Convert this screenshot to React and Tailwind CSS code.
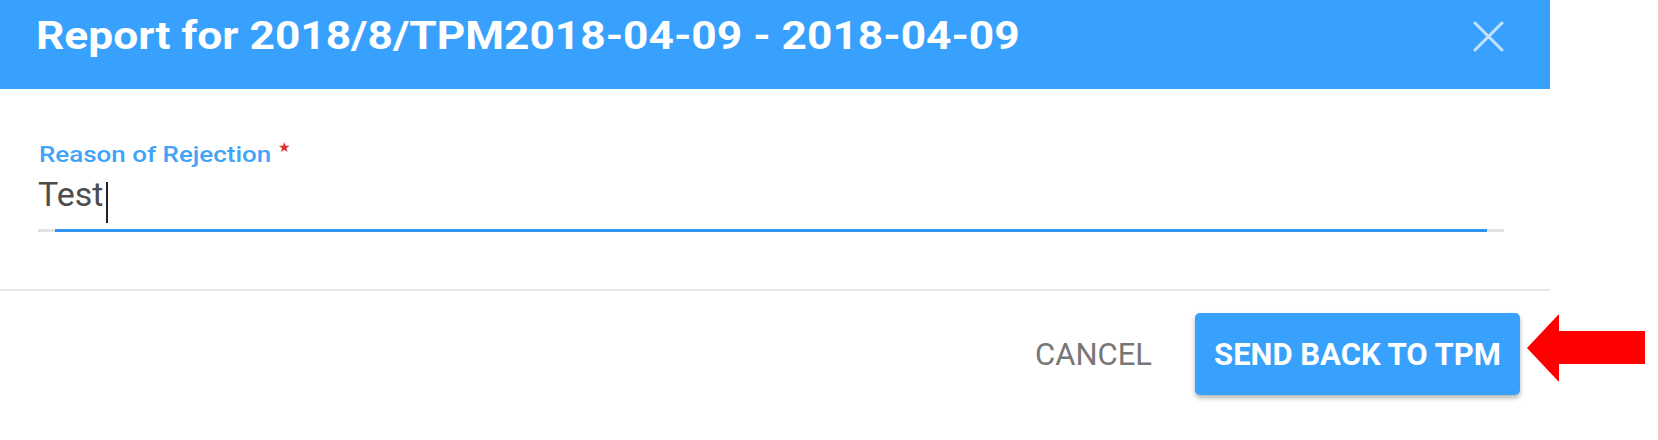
import React from 'react';

const BLUE = 'bg-[#38a1fd]';

const CloseIcon = () => (
    <svg width="31" height="31" viewBox="0 0 31 31" className="mt-[21px] mr-[46px] shrink-0">
        <path d="M2 2L29 29M29 2L2 29" stroke="#c6e3fe" strokeWidth="3" strokeLinecap="round" />
    </svg>
);

const App = () => {
    return (
        <div className="relative w-[1658px] h-[440px] bg-white font-['Roboto',sans-serif] overflow-hidden">
            <div className="w-[1550px]">
                {/* Header */}
                <div className={`flex items-start justify-between h-[89px] ${BLUE} pl-[36px]`}>
                    <h2 className="pt-[17px] text-[38px] leading-none font-bold text-white whitespace-nowrap origin-left scale-x-[1.165]">
                        Report for 2018/8/TPM2018-04-09 - 2018-04-09
                    </h2>
                    <CloseIcon />
                </div>

                {/* Body */}
                <div className="h-[200px] pl-[38px] pr-[46px] pt-[55px]">
                    <label className="flex items-start pl-[1px] text-[22px] leading-none font-medium text-[#42a4f7]">
                        <span className="origin-left scale-x-[1.18] whitespace-nowrap">Reason of Rejection</span>
                        <span className="ml-[42px] -mt-[4px] text-[14px] text-[#e0322f]">★</span>
                    </label>
                    <div className="flex items-start mt-[11px] h-[46px]">
                        <span className="text-[34px] leading-none text-[#4d4d4d]">Test</span>
                        <span className="ml-[3px] mt-[5px] w-[2px] h-[41px] bg-[#222]" />
                    </div>
                    <div className="mt-[6px] h-[3px] bg-[#e2e2e2]">
                        <div className="mx-[17px] h-full bg-[#2f96f3]" />
                    </div>
                </div>

                <div className="h-[2px] bg-[#e8e8e8]" />

                {/* Actions */}
                <div className="flex items-center justify-end pt-[22px] pr-[30px]">
                    <button className="mr-[43px] text-[31px] leading-none text-[#777]">
                        CANCEL
                    </button>
                    <button className={`w-[325px] h-[82px] rounded-[5px] ${BLUE} shadow-[0_3px_5px_rgba(0,0,0,0.3)] text-[31px] leading-none font-bold text-white`}>
                        SEND BACK TO TPM
                    </button>
                </div>
            </div>

            {/* Pointer arrow */}
            <svg width="118" height="68" viewBox="0 0 118 68" className="absolute left-[1527px] top-[314px]">
                <polygon points="0,34 32,0 32,17 118,17 118,50 32,50 32,68" fill="#ff0000" />
            </svg>
        </div>
    );
};

export default App;
